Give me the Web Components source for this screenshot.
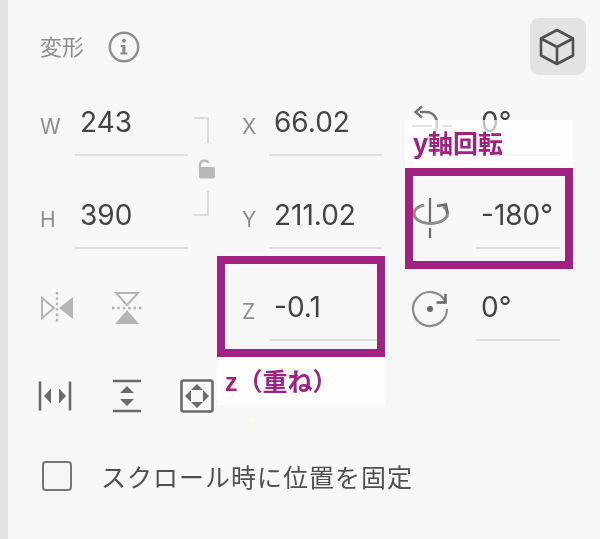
<!DOCTYPE html>
<html lang="ja"><head><meta charset="utf-8"><title>変形</title>
<style>html,body{margin:0;padding:0;background:#f7f7f7}</style></head>
<body>
<tf-panel>
  <tf-header slot="header" title-text="変形"></tf-header>
  <tf-field slot="w" label="W" value="243" style="--lw:35px;--vw:113px"></tf-field>
  <tf-field slot="x" label="X" value="66.02" style="--lw:27px;--vw:113px"></tf-field>
  <tf-field slot="r1" icon="rotx" value="0°" style="--lw:63px;--vw:84px"></tf-field>
  <tf-field slot="h" label="H" value="390" style="--lw:35px;--vw:113px"></tf-field>
  <tf-field slot="y" label="Y" value="211.02" style="--lw:27px;--vw:113px"></tf-field>
  <tf-field slot="r2" icon="roty" value="-180°" style="--lw:63px;--vw:84px"></tf-field>
  <tf-field slot="z" label="Z" value="-0.1" style="--lw:27px;--vw:113px"></tf-field>
  <tf-field slot="r3" icon="rotz" value="0°" style="--lw:63px;--vw:84px"></tf-field>
  <tf-check slot="check">スクロール時に位置を固定</tf-check>
</tf-panel>
<script>
const ICONS={
 info:`<svg width="32" height="32" viewBox="0 0 32 32"><circle cx="16" cy="16" r="14.2" fill="none" stroke="#8f8f8f" stroke-width="2.4"/><circle cx="16" cy="9.8" r="2" fill="#8a8a8a"/><path d="M12.8 14h4.6v7.6h2v2h-7v-2h2v-5.6h-1.600z" fill="#8a8a8a"/></svg>`,
 cube:`<svg width="36" height="38" viewBox="0 0 36 38"><path d="M18 2 34 10.500V27.500L18 36 2 27.500V10.500ZM2 10.500 18 19 34 10.500M18 19V36" fill="none" stroke="#505050" stroke-width="2.600" stroke-linejoin="round"/></svg>`,
 rotx:`<svg width="44" height="44" viewBox="0 0 44 44" style="overflow:visible"><path d="M7 6h6c7 0 11 5 11 12 0 7-3 12-10 15" fill="none" stroke="#747474" stroke-width="2.400"/><path d="M9 .5 2.500 6 9 11.500" fill="none" stroke="#747474" stroke-width="2.400"/><path d="M-1 20h20M29 20h10" stroke="#a0a0a0" stroke-width="2" fill="none"/></svg>`,
 roty:`<svg width="38" height="44" viewBox="0 0 38 44" style="overflow:visible"><path d="M17 -1V24M17 29V39" stroke="#6a6a6a" stroke-width="2.200" fill="none"/><path d="M11 6C5 7.500 1 10.500 1 14.500c0 5.500 7 10 16.500 10s17-4.500 17-10c0-3-1.500-5-4.500-7" fill="none" stroke="#8c8c8c" stroke-width="3"/><path d="M24 7 33 5.500l1.500 8.500" fill="none" stroke="#6a6a6a" stroke-width="2.400"/></svg>`,
 rotz:`<svg width="38" height="38" viewBox="2 5 38 38" style="overflow:visible"><path d="M34 12A17 17 0 1 0 36 20" fill="none" stroke="#8a8a8a" stroke-width="2.200"/><path d="M34.500 5v8.500h-9" fill="none" stroke="#666" stroke-width="2.400"/><circle cx="19" cy="20" r="3" fill="#666"/></svg>`,
 flipx:`<svg width="34" height="34" viewBox="0 0 34 34"><path d="M2 7 14 17 2 27Z" fill="none" stroke="#b5b5b5" stroke-width="2"/><path d="M33 6V28L19 17Z" fill="#b5b5b5"/><path d="M17 1V33" stroke="#b0b0b0" stroke-width="2.400" stroke-dasharray="2.400 3" fill="none"/></svg>`,
 flipy:`<svg width="34" height="34" viewBox="0 0 34 34"><path d="M6 2H28L17 14Z" fill="none" stroke="#b5b5b5" stroke-width="2"/><path d="M5 33H29L17 19Z" fill="#b5b5b5"/><path d="M2 17H32" stroke="#b0b0b0" stroke-width="2.400" stroke-dasharray="2.400 3" fill="none"/></svg>`,
 spreadx:`<svg width="34" height="34" viewBox="0 0 34 34"><path d="M2 2.500V31.500M32 2.500V31.500" stroke="#6a6a6a" stroke-width="2.600" fill="none"/><path d="M13 9.500V24.500L6 17ZM21 9.500V24.500L28 17Z" fill="#6a6a6a"/></svg>`,
 spready:`<svg width="34" height="34" viewBox="0 0 34 34"><path d="M3 2H31M3 32H31" stroke="#6a6a6a" stroke-width="2.600" fill="none"/><path d="M10 14H24L17 7ZM10 20H24L17 27Z" fill="#6a6a6a"/></svg>`,
 fit:`<svg width="34" height="34" viewBox="0 0 34 34"><rect x="1.500" y="1.500" width="31" height="31" rx="2" fill="none" stroke="#6a6a6a" stroke-width="2.600"/><path d="M11 11H23L17 5ZM11 23H23L17 29ZM11 11V23L5 17ZM23 11V23L29 17Z" fill="#6a6a6a"/></svg>`,
 lock:`<svg width="54" height="148" viewBox="0 0 54 148"><path d="M6 18H20V43M20 91V115H6" fill="none" stroke="#dcdcdc" stroke-width="2"/><path d="M12 70v-5a4.500 4.500 0 0 1 8.500-2" fill="none" stroke="#b8b8b8" stroke-width="2.200"/><rect x="11" y="67" width="16" height="11.500" rx="2" fill="#b8b8b8"/></svg>`
};
function def(name,css,html){
  customElements.define(name,class extends HTMLElement{
    connectedCallback(){
      if(this.shadowRoot)return;
      const r=this.attachShadow({mode:'open'});
      r.innerHTML=`<style>${css}</style>`+(typeof html==='function'?html(this):html);
    }
  });
}
def('tf-icon',`:host{display:inline-flex;flex:none;line-height:0}`,e=>ICONS[e.getAttribute('name')]);
def('tf-header',`
 :host{display:flex;align-items:center;height:57px;padding-right:14px;font:400 22px/1 "Noto Sans CJK JP",sans-serif;color:#8e8e8e}
 .t{margin:0 24px 4px 0}
 .info{display:flex}
 .cube{margin-left:auto;width:56px;height:57px;border-radius:9px;background:#e3e3e3;display:flex;align-items:center;justify-content:center}
 .cube tf-icon{margin-left:-2px}
`,e=>`<span class="t">${e.getAttribute('title-text')}</span><span class="info"><tf-icon name="info"></tf-icon></span><span class="cube"><tf-icon name="cube"></tf-icon></span>`);
def('tf-field',`
 :host{display:flex;align-items:flex-end;height:56px}
 .l{flex:0 0 var(--lw);box-sizing:border-box;font:400 21px/24px Inter,sans-serif;color:#8c8c8c;padding-bottom:17px}
 .i{flex:0 0 var(--lw);align-self:stretch;display:flex;align-items:center}
 .v{flex:0 0 var(--vw);box-sizing:border-box;padding:0 0 17px 5px;border-bottom:2px solid #e0e0e0;font:400 28px/30px Inter,sans-serif;color:#444}
`,e=>{
  const ic=e.getAttribute('icon');
  const left=ic?`<span class="i"><tf-icon name="${ic}"></tf-icon></span>`:`<span class="l">${e.getAttribute('label')}</span>`;
  return left+`<span class="v">${e.getAttribute('value')}</span>`;
});
def('tf-check',`
 :host{display:flex;align-items:center;height:30px;font:400 25px/30px "Noto Sans CJK JP",sans-serif;letter-spacing:1px;color:#505050}
 .b{box-sizing:border-box;width:30px;height:30px;border:2.500px solid #757575;border-radius:4px;margin:0 29px 0 2px;flex:none}
`,`<span class="b"></span><slot></slot>`);
def('tf-panel',`
 :host{display:block;position:relative;box-sizing:border-box;width:600px;height:539px;overflow:hidden;background:#f7f7f7;border-left:8px solid #e3e3e3;padding:18px 0 0 32px;filter:blur(.4px)}
 .g{display:grid;margin-top:25px;grid-template-columns:148px 54px 140px 31px 147px;grid-template-rows:56px 56px 56px;row-gap:36.500px}
 .lock{grid-column:2;grid-row:1/3;line-height:0}
 .c1{grid-column:1}.c3{grid-column:3}.c5{grid-column:5}
 .flip{grid-column:1;grid-row:3;display:flex;gap:36px;padding-top:6px;align-items:flex-start}
 .tools{display:flex;margin:38px 0 0 -2px}
 .tools tf-icon+tf-icon{margin-left:38px}
 .tools tf-icon:last-child{margin-left:36px}
 .chk{margin-top:48px}
 .box{position:absolute;box-sizing:border-box;width:168px;height:101px;border:8px solid #a0217f}
 .note{position:absolute;box-sizing:border-box;width:168px;height:48px;background:rgba(255,255,255,.68);padding-left:8px;font:700 25px/1 "Noto Sans CJK JP",sans-serif;color:#a0217f;display:flex;align-items:center}
 .ny b{font:700 27px/1 "Liberation Sans",sans-serif}
 .nz b{font:700 25px/1 "Liberation Sans",sans-serif}
 .ghost{position:absolute;left:238px;top:414px;font:700 17px/1 Inter,sans-serif;color:#fbfbe9}
`,`<slot name="header"></slot>
 <div class="g">
  <div class="c1" style="grid-row:1"><slot name="w"></slot></div>
  <div class="lock"><tf-icon name="lock"></tf-icon></div>
  <div class="c3" style="grid-row:1"><slot name="x"></slot></div>
  <div class="c5" style="grid-row:1"><slot name="r1"></slot></div>
  <div class="c1" style="grid-row:2"><slot name="h"></slot></div>
  <div class="c3" style="grid-row:2"><slot name="y"></slot></div>
  <div class="c5" style="grid-row:2"><slot name="r2"></slot></div>
  <div class="flip"><tf-icon name="flipx"></tf-icon><tf-icon name="flipy"></tf-icon></div>
  <div class="c3" style="grid-row:3"><slot name="z"></slot></div>
  <div class="c5" style="grid-row:3"><slot name="r3"></slot></div>
 </div>
 <div class="tools"><tf-icon name="spreadx"></tf-icon><tf-icon name="spready"></tf-icon><tf-icon name="fit"></tf-icon></div>
 <div class="chk"><slot name="check"></slot></div>
 <div class="note ny" style="left:397px;top:120px"><span><b>y</b>軸回転</span></div>
 <div class="box" style="left:397px;top:168px"></div>
 <div class="box" style="left:209px;top:256px"></div>
 <div class="note nz" style="left:209px;top:357px"><span><b>z</b>（重ね）</span></div>
 <div class="ghost">z</div>
`);
</script>
</body></html>
